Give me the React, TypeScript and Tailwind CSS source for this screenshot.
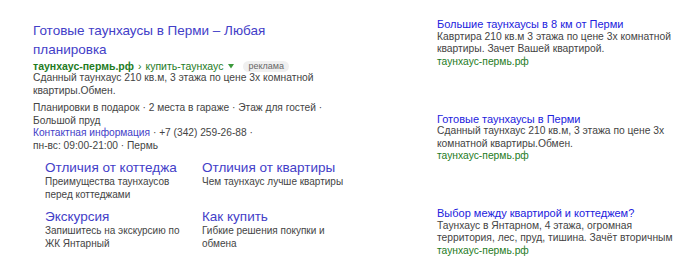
export default function App() {
  const rightAds = [
    {
      title: "Большие таунхаусы в 8 км от Перми",
      text: "Кавртира 210 кв.м 3 этажа по цене 3х комнатной квартиры. Зачет Вашей квартирой.",
    },
    {
      title: "Готовые таунхаусы в Перми",
      text: "Сданный таунхаус 210 кв.м, 3 этажа по цене 3х комнатной квартиры.Обмен.",
    },
    {
      title: "Выбор между квартирой и коттеджем?",
      text: "Таунхаус в Янтарном, 4 этажа, огромная территория, лес, пруд, тишина. Зачёт вторичным",
    },
  ];

  const sitelinks = [
    { title: "Отличия от коттеджа", text: "Преимущества таунхаусов перед коттеджами", w: "w-[140px]" },
    { title: "Отличия от квартиры", text: "Чем таунхаус лучше квартиры", w: "w-[150px]" },
    { title: "Экскурсия", text: "Запишитесь на экскурсию по ЖК Янтарный", w: "w-[140px]" },
    { title: "Как купить", text: "Гибкие решения покупки и обмена", w: "w-[150px]" },
  ];

  const extras = ["Планировки в подарок", "2 места в гараже", "Этаж для гостей", "Большой пруд"];

  return (
    <div className="w-[687px] h-[275px] bg-white flex font-['Liberation_Sans',Arial,sans-serif] text-[#444] overflow-hidden">
      {/* Main ad */}
      <div className="w-[296px] ml-[33px] pt-[21px] shrink-0">
        <a className="block text-[13.5px] leading-[19px] text-[#4340c8]">
          Готовые таунхаусы в Перми – Любая планировка
        </a>
        <div className="flex items-center text-[10.5px] leading-[12px] mt-[1px] text-[#1e7b1e]">
          <span className="font-bold">таунхаус-пермь.рф</span>
          <span className="mx-[4px]">›</span>
          <span>купить-таунхаус</span>
          <svg width="6" height="5" viewBox="0 0 6 5" className="ml-[5px] fill-[#3b9a3b]">
            <path d="M0 0h6L3 4.5z" />
          </svg>
          <span className="ml-[9px] px-[5px] rounded-[6px] bg-[#f0f0f0] text-[#666] text-[9px] leading-[11px]">
            реклама
          </span>
        </div>
        <p className="text-[10.3px] leading-[12.5px]">
          Сданный таунхаус 210 кв.м, 3 этажа по цене 3х комнатной квартиры.Обмен.
        </p>
        <p className="text-[10.2px] leading-[12.5px] mt-[5px]">
          {extras.map((e, i) => (
            <span key={e}>
              {i > 0 && " "}
              <span className="whitespace-nowrap">
                {e}
                {i < extras.length - 1 && " ·"}
              </span>
            </span>
          ))}
        </p>
        <p className="text-[10.2px] leading-[12.5px]">
          <span className="whitespace-nowrap">
            <span className="text-[#4340c8]">Контактная информация</span> ·
          </span>{" "}
          <span className="whitespace-nowrap">+7 (342) 259-26-88 ·</span>{" "}
          <span className="whitespace-nowrap">пн-вс: 09:00-21:00 · Пермь</span>
        </p>
        <div className="grid grid-cols-[157px_150px] ml-[12px] mt-[7px] gap-y-[7px]">
          {sitelinks.map((s) => (
            <div key={s.title}>
              <a className="block text-[13.5px] leading-[17px] text-[#4340c8]">{s.title}</a>
              <p className={`text-[10px] leading-[12.5px] ${s.w}`}>{s.text}</p>
            </div>
          ))}
        </div>
      </div>

      {/* Right ads */}
      <div className="ml-auto w-[248px] mr-[2px] pt-[18px] flex flex-col gap-[44.5px]">
        {rightAds.map((ad) => (
          <div key={ad.title} className="text-[10.3px] leading-[12.5px]">
            <a className="block text-[11px] leading-[12.5px] text-[#2222dd]">{ad.title}</a>
            <p>{ad.text}</p>
            <p className="text-[#1e7b1e]">таунхаус-пермь.рф</p>
          </div>
        ))}
      </div>
    </div>
  );
}
